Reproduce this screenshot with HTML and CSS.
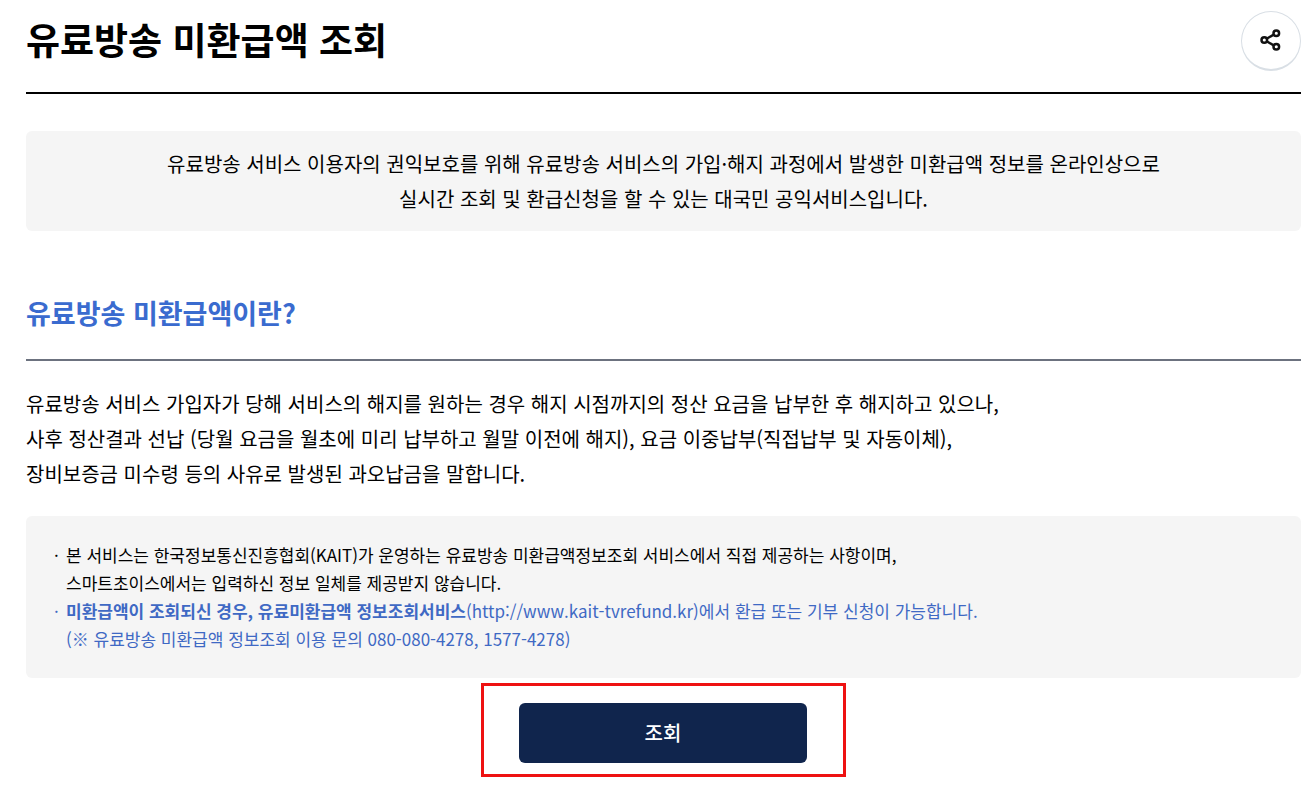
FILE: index.html
```html
<!DOCTYPE html>
<html lang="ko">
<head>
<meta charset="utf-8">
<meta name="viewport" content="width=device-width, initial-scale=1">
<title>유료방송 미환급액 조회</title>
<link rel="stylesheet" href="styles.css">
</head>
<body>
<main class="page">
  <header class="page-header">
    <h1 class="page-title">유료방송 미환급액 조회</h1>
    <button class="share" type="button" aria-label="공유">
      <svg class="share-icon" viewBox="0 0 24 24" aria-hidden="true">
        <path d="M8 10.500 15 6.500M8 13.500 15 17.500"/>
        <circle cx="5.300" cy="12" r="2.800"/>
        <circle cx="17.300" cy="5.200" r="2.800"/>
        <circle cx="17.300" cy="18.800" r="2.800"/>
      </svg>
    </button>
  </header>
  <p class="intro">유료방송 서비스 이용자의 권익보호를 위해 유료방송 서비스의 가입·해지 과정에서 발생한 미환급액 정보를 온라인상으로<br>실시간 조회 및 환급신청을 할 수 있는 대국민 공익서비스입니다.</p>
  <section class="about">
    <h2 class="section-title">유료방송 미환급액이란?</h2>
    <p class="description">유료방송 서비스 가입자가 당해 서비스의 해지를 원하는 경우 해지 시점까지의 정산 요금을 납부한 후 해지하고 있으나,<br>사후 정산결과 선납 (당월 요금을 월초에 미리 납부하고 월말 이전에 해지), 요금 이중납부(직접납부 및 자동이체),<br>장비보증금 미수령 등의 사유로 발생된 과오납금을 말합니다.</p>
    <ul class="notes">
      <li class="note">본 서비스는 한국정보통신진흥협회(KAIT)가 운영하는 유료방송 미환급액정보조회 서비스에서 직접 제공하는 사항이며,<br>스마트초이스에서는 입력하신 정보 일체를 제공받지 않습니다.</li>
      <li class="note note-accent"><strong>미환급액이 조회되신 경우, 유료미환급액 정보조회서비스</strong>(<a class="note-link" href="http://www.kait-tvrefund.kr">http://www.kait-tvrefund.kr</a>)에서 환급 또는 기부 신청이 가능합니다.<br>(※ 유료방송 미환급액 정보조회 이용 문의 080-080-4278, 1577-4278)</li>
    </ul>
  </section>
  <div class="actions">
    <div class="highlight">
      <button class="submit" type="button">조회</button>
    </div>
  </div>
</main>
</body>
</html>
```
FILE: styles.css
```css
* {
  box-sizing: border-box;
}

body {
  margin: 0;
  background: #fff;
  color: #000;
  font-family: "Noto Sans CJK KR", sans-serif;
  font-size: 20px;
}

h1, h2, p, ul {
  margin: 0;
}

.page {
  padding: 11px 4px 24px 26px;
}

.page-header {
  display: flex;
  justify-content: space-between;
  align-items: flex-start;
  padding-bottom: 21px;
  border-bottom: 2px solid #000;
}

.page-title {
  font-size: 37px;
  line-height: 57px;
  font-weight: 700;
}

.share {
  display: flex;
  align-items: center;
  justify-content: center;
  width: 60px;
  height: 60px;
  padding: 0 0 2px;
  border: 1px solid #d9dfe5;
  border-bottom-width: 2px;
  border-radius: 50%;
  background: #fff;
}

.share-icon {
  width: 24px;
  height: 24px;
  fill: none;
  stroke: #111;
  stroke-width: 2.5;
}

.intro {
  margin-top: 37px;
  padding: 15px 16px;
  border-radius: 6px;
  background: #f5f5f5;
  line-height: 35px;
  text-align: center;
}

.section-title {
  margin-top: 62px;
  padding-bottom: 26px;
  border-bottom: 2px solid #6c727f;
  color: #3a6bcf;
  font-size: 27px;
  line-height: 40px;
  font-weight: 700;
}

.description {
  margin-top: 25px;
  line-height: 35px;
}

.notes {
  margin-top: 25px;
  padding: 25px 28px;
  border-radius: 6px;
  background: #f5f5f5;
  font-size: 17px;
  line-height: 28px;
  list-style: none;
}

.note {
  display: flow-root;
  padding-left: 12px;
}

.note::before {
  content: "·";
  float: left;
  margin-left: -12px;
}

.note-accent {
  color: #3f69c4;
}

.note-link {
  color: inherit;
  text-decoration: none;
}

.actions {
  display: flex;
  justify-content: center;
  margin-top: 5px;
}

.highlight {
  padding: 17px 36px 11px 35px;
  border: 3px solid #ee1111;
}

.submit {
  width: 288px;
  height: 60px;
  border: 0;
  border-radius: 6px;
  background: #10254d;
  color: #fff;
  font: 500 20px/28px "Noto Sans CJK KR", sans-serif;
}
```
